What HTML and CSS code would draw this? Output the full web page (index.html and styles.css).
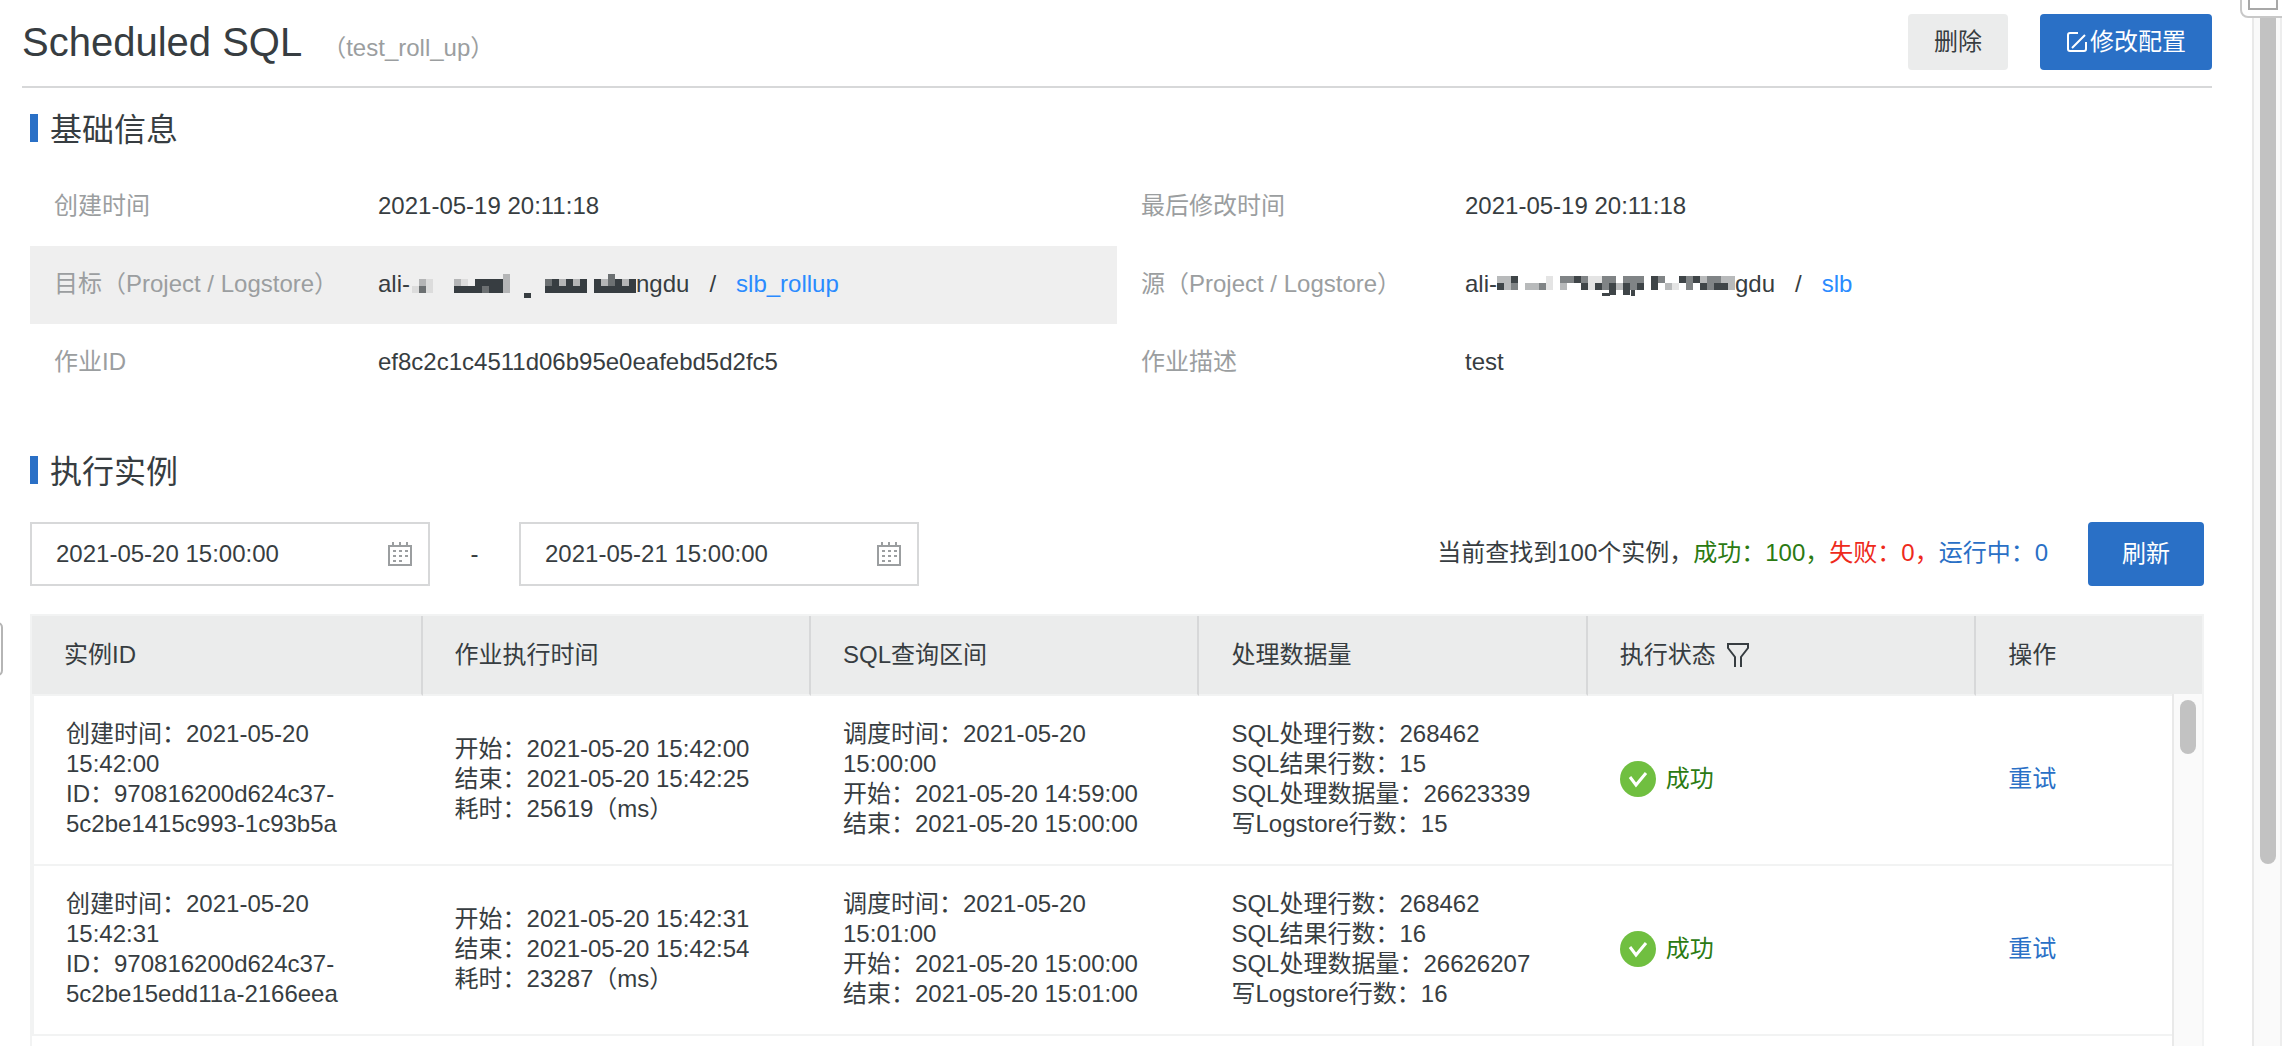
FILE: index.html
```html
<!DOCTYPE html>
<html lang="zh-CN">
<head>
<meta charset="utf-8">
<title>Scheduled SQL</title>
<meta name="viewport" content="width=device-width, initial-scale=1">
<link rel="stylesheet" href="styles.css">
</head>
<body>
<div class="app">
  <main class="main">
    <header class="page-header">
      <h1 class="page-title">Scheduled SQL</h1>
      <span class="page-subtitle">（test_roll_up）</span>
      <div class="page-actions">
        <button class="btn btn-normal" type="button">删除</button>
        <button class="btn btn-primary" type="button">
          <svg class="icon-edit" viewBox="0 0 22 22" aria-hidden="true"><path d="M12 2H4Q2 2 2 4V18Q2 20 4 20H18Q20 20 20 18V11M6 17L19 4"/></svg>修改配置</button>
      </div>
    </header>

    <section class="section">
      <h2 class="section-title">基础信息</h2>
      <dl class="info">
        <div class="info-item"><dt>创建时间</dt><dd>2021-05-19 20:11:18</dd></div>
        <div class="info-item"><dt>最后修改时间</dt><dd>2021-05-19 20:11:18</dd></div>
        <div class="info-item info-item-active"><dt>目标（Project / Logstore）</dt><dd>ali-<svg class="mask mask-target" viewBox="0 2 226 35" aria-hidden="true">
          <g fill="#373d41"><path d="M44 14h14v7h7v-7h28v14H44zM114 28h7v5h-7zM135 14h42v14h-42zM184 14h42v14h-42z"/></g>
          <g fill="#b4b5b6"><path d="M9 14h7v7H9zM44 14h7v7h-7zM93 9h7v19h-7zM149 14h7v7h-7zM163 14h7v7h-7zM191 14h7v7h-7zM212 14h7v7h-7z"/></g>
          <g fill="#6c7072"><path d="M9 21h7v7H9zM72 21h7v7h-7zM135 14h7v7h-7zM198 9h7v12h-7z"/></g>
          <g fill="#dcdcdc"><path d="M2 21h7v7H2zM16 14h7v7h-7zM16 21h7v7h-7zM51 14h7v7h-7z"/></g>
        </svg>ngdu<span class="slash">/</span><a href="#">slb_rollup</a></dd></div>
        <div class="info-item"><dt>源（Project / Logstore）</dt><dd>ali-<svg class="mask mask-source" viewBox="0 0 238 35" aria-hidden="true">
          <g fill="#3f4548"><path d="M14 9h7v7h-7zM77 9h7v7h-7zM154 9h7v14h-7zM182 9h7v7h-7zM196 9h7v7h-7zM0 16h7v7H0zM84 16h7v7h-7zM98 16h7v7h-7zM112 16h7v12h-7zM126 16h7v12h-7zM140 16h7v7h-7zM203 16h7v7h-7zM217 16h14v7h-14zM105 26h8v3h-8zM134 23h4v6h-4z"/></g>
          <g fill="#808486"><path d="M63 9h14v7H63zM84 9h7v7h-7zM105 9h14v7h-14zM126 9h21v7h-21zM161 9h7v7h-7zM189 9h7v14h-7zM210 9h14v7h-14zM14 16h7v7h-7zM42 16h7v7h-7zM105 16h7v7h-7zM133 16h7v7h-7zM210 16h7v7h-7z"/></g>
          <g fill="#b8babb"><path d="M0 9h14v7H0zM203 9h7v7h-7zM224 9h14v7h-14zM7 16h7v7H7zM28 16h14v7H28zM63 16h7v7h-7zM119 16h7v7h-7zM168 16h7v7h-7zM231 16h7v7h-7z"/></g>
          <g fill="#e4e4e4"><path d="M49 9h7v14h-7zM91 9h14v7H91zM91 16h7v7h-7zM175 16h7v7h-7z"/></g>
        </svg>gdu<span class="slash">/</span><a href="#">slb</a></dd></div>
        <div class="info-item"><dt>作业ID</dt><dd>ef8c2c1c4511d06b95e0eafebd5d2fc5</dd></div>
        <div class="info-item"><dt>作业描述</dt><dd>test</dd></div>
      </dl>
    </section>

    <section class="section section-instances">
      <h2 class="section-title">执行实例</h2>
      <form class="toolbar">
        <div class="date-field">
          <input class="date-input" type="text" aria-label="开始时间" value="2021-05-20 15:00:00">
          <svg class="icon-calendar" viewBox="0 0 24 24" aria-hidden="true"><path class="line" d="M1 4H23V23H1ZM5 0V4M12 0V4M19 0V4"/><path class="dots" d="M5 8h3v2H5zM11 8h3v2h-3zM17 8h3v2h-3zM5 13h3v2H5zM11 13h3v2h-3zM17 13h3v2h-3zM5 18h3v2H5zM11 18h3v2h-3z"/></svg>
        </div>
        <span class="range-dash">-</span>
        <div class="date-field">
          <input class="date-input" type="text" aria-label="结束时间" value="2021-05-21 15:00:00">
          <svg class="icon-calendar" viewBox="0 0 24 24" aria-hidden="true"><path class="line" d="M1 4H23V23H1ZM5 0V4M12 0V4M19 0V4"/><path class="dots" d="M5 8h3v2H5zM11 8h3v2h-3zM17 8h3v2h-3zM5 13h3v2H5zM11 13h3v2h-3zM17 13h3v2h-3zM5 18h3v2H5zM11 18h3v2h-3z"/></svg>
        </div>
        <p class="summary">当前查找到100个实例，<span class="ok">成功：100，</span><span class="fail">失败：0，</span><span class="running">运行中：0</span></p>
        <button class="btn btn-primary btn-refresh" type="button">刷新</button>
      </form>

      <div class="table-wrap">
        <table class="instances">
          <colgroup><col class="col-id"><col class="col"><col class="col"><col class="col"><col class="col"><col></colgroup>
          <thead>
            <tr>
              <th>实例ID</th><th>作业执行时间</th><th>SQL查询区间</th><th>处理数据量</th>
              <th><span class="status">执行状态<svg class="icon-filter" viewBox="0 0 24 26" aria-hidden="true"><path d="M9 25V15L2 6V2H22V6L15 15V25"/></svg></span></th>
              <th>操作</th>
            </tr>
          </thead>
          <tbody>
            <tr>
              <td>创建时间：2021-05-20 15:42:00<br>ID：970816200d624c37-5c2be1415c993-1c93b5a</td>
              <td>开始：2021-05-20 15:42:00<br>结束：2021-05-20 15:42:25<br>耗时：25619（ms）</td>
              <td>调度时间：2021-05-20 15:00:00<br>开始：2021-05-20 14:59:00<br>结束：2021-05-20 15:00:00</td>
              <td>SQL处理行数：268462<br>SQL结果行数：15<br>SQL处理数据量：26623339<br>写Logstore行数：15</td>
              <td><span class="status ok"><svg class="icon-success" viewBox="0 0 36 36" aria-hidden="true"><circle cx="18" cy="18" r="18"/><path d="M10 16L16 24L26 12"/></svg>成功</span></td>
              <td><a class="retry" href="#">重试</a></td>
            </tr>
            <tr>
              <td>创建时间：2021-05-20 15:42:31<br>ID：970816200d624c37-5c2be15edd11a-2166eea</td>
              <td>开始：2021-05-20 15:42:31<br>结束：2021-05-20 15:42:54<br>耗时：23287（ms）</td>
              <td>调度时间：2021-05-20 15:01:00<br>开始：2021-05-20 15:00:00<br>结束：2021-05-20 15:01:00</td>
              <td>SQL处理行数：268462<br>SQL结果行数：16<br>SQL处理数据量：26626207<br>写Logstore行数：16</td>
              <td><span class="status ok"><svg class="icon-success" viewBox="0 0 36 36" aria-hidden="true"><circle cx="18" cy="18" r="18"/><path d="M10 16L16 24L26 12"/></svg>成功</span></td>
              <td><a class="retry" href="#">重试</a></td>
            </tr>
          </tbody>
        </table>
        <div class="table-scrollbar"><div class="table-thumb"></div></div>
      </div>
    </section>
  </main>
  <div class="page-scrollbar"><div class="page-thumb"></div></div>
  <div class="side-handle"></div>
  <div class="corner-widget"><div class="corner-icon"></div></div>
</div>
</body>
</html>
```
FILE: styles.css
```css
* { box-sizing: border-box; }

body {
  margin: 0;
  font: 24px/30px "Liberation Sans", "Noto Sans CJK SC", sans-serif;
  color: #373d41;
  background: #fff;
}

h1, h2, p, dl, dd { margin: 0; font-weight: 400; }
a { color: #2a8bff; text-decoration: none; }

.app {
  position: relative;
  display: flex;
  height: 100vh;
  overflow: hidden;
}

.main {
  flex: 1;
  display: flex;
  flex-direction: column;
  padding: 0 40px 0 22px;
}

/* Header */
.page-header {
  display: flex;
  align-items: center;
  height: 88px;
  flex: none;
  padding-bottom: 2px;
  border-bottom: 2px solid #d7d8d9;
}
.page-title { font-size: 40px; line-height: 48px; }
.page-subtitle { margin-left: 20px; padding-top: 12px; color: #9b9ea0; }
.page-actions { display: flex; gap: 32px; margin-left: auto; }

.btn {
  display: flex;
  align-items: center;
  justify-content: center;
  height: 56px;
  padding: 0 26px;
  border: 0;
  border-radius: 4px;
  font: inherit;
}
.btn-normal { color: #373d41; background: #ebecec; }
.btn-primary { color: #fff; background: #2a70c6; }
.btn-refresh { height: 64px; padding: 0 34px; }

.icon-edit {
  width: 22px;
  height: 22px;
  margin-right: 2px;
  fill: none;
  stroke: #fff;
  stroke-width: 2;
}

/* Sections */
.section { padding: 0 8px; }
.section-title {
  display: flex;
  align-items: center;
  gap: 12px;
  height: 80px;
  padding-top: 4px;
  font-size: 32px;
  line-height: 40px;
}
.section-title::before {
  content: "";
  width: 8px;
  height: 28px;
  margin-bottom: 4px;
  background: #2a70c6;
}
.section-instances {
  flex: 1;
  display: flex;
  flex-direction: column;
  padding-top: 28px;
}
.section-instances .section-title { margin-bottom: 12px; }

.info { display: grid; grid-template-columns: 1fr 1fr; }
.info-item {
  display: flex;
  align-items: center;
  height: 78px;
  padding: 0 24px 2px;
}
.info-item-active { background: #efefef; }
.info-item dt { width: 324px; color: #9b9ea0; }
.info-item dd { display: flex; align-items: center; }
.slash { margin: 0 20px; }
.mask { height: 35px; }
.mask-target { width: 226px; }
.mask-source { width: 238px; }

/* Date range and totals */
.toolbar { display: flex; align-items: center; }
.date-field {
  display: flex;
  align-items: center;
  width: 400px;
  height: 64px;
  padding: 0 16px 0 24px;
  border: 2px solid #d7d8d9;
}
.date-input {
  flex: 1;
  min-width: 0;
  padding: 0;
  border: 0;
  outline: 0;
  font: inherit;
  color: inherit;
  background: none;
}
.icon-calendar { width: 24px; height: 24px; }
.icon-calendar .line { fill: none; stroke: #9b9ea0; stroke-width: 2; }
.icon-calendar .dots { fill: #9b9ea0; }
.range-dash { width: 89px; text-align: center; }
.summary { margin-left: auto; margin-right: 40px; padding-bottom: 2px; }
.ok { color: #2b7a12; }
.fail { color: #ee2a1b; }
.running { color: #2a70c6; }

/* Instances table */
.table-wrap {
  position: relative;
  flex: 1;
  margin-top: 28px;
  border: 2px solid #f2f3f3;
  border-bottom: 0;
}
.instances {
  width: 100%;
  table-layout: fixed;
  border-collapse: separate;
  border-spacing: 0;
}
.col-id { width: 18%; }
.col { width: 17.9%; }
.instances th {
  height: 80px;
  padding: 0 32px;
  font-weight: 400;
  text-align: left;
  background: #ebecec;
  border-right: 2px solid #d7d8d9;
  border-bottom: 2px solid #f2f3f3;
}
.instances th:last-child { border-right: 0; }
.instances td {
  height: 170px;
  padding: 0 32px 2px;
  border-bottom: 2px solid #f2f3f3;
}
.instances td:first-child { border-left: 2px solid #f2f3f3; }
.status { display: flex; align-items: center; gap: 10px; }
.icon-filter { width: 24px; height: 26px; fill: none; stroke: #373d41; stroke-width: 2; }
.icon-success { width: 36px; height: 36px; fill: #70bf40; }
.icon-success path { fill: none; stroke: #fff; stroke-width: 3; }
.retry { color: #2a70c6; }

.table-scrollbar {
  position: absolute;
  top: 78px;
  right: 0;
  bottom: 0;
  width: 30px;
  padding: 6px 6px 0;
  border-left: 2px solid #e9e9e9;
  background: #fafafa;
}
.table-thumb { height: 54px; border-radius: 8px; background: #c2c2c2; }

/* Window chrome */
.page-scrollbar {
  width: 30px;
  padding: 0 4px 0 6px;
  border-left: 2px solid #e9e9e9;
  border-right: 2px solid #ededed;
  background: #fafafa;
}
.page-thumb { height: 864px; border-radius: 8px; background: #c2c2c2; }
.side-handle {
  position: absolute;
  left: -8px;
  top: 622px;
  width: 11px;
  height: 54px;
  border: 2px solid #b5b5b5;
  border-radius: 6px;
}
.corner-widget {
  position: absolute;
  top: -8px;
  right: -8px;
  width: 50px;
  height: 26px;
  padding: 0 0 6px 6px;
  border: 2px solid #c8c8c8;
  border-radius: 8px;
  background: #fff;
}
.corner-icon { width: 30px; height: 16px; border: 2px solid #a8a8a8; }
```
